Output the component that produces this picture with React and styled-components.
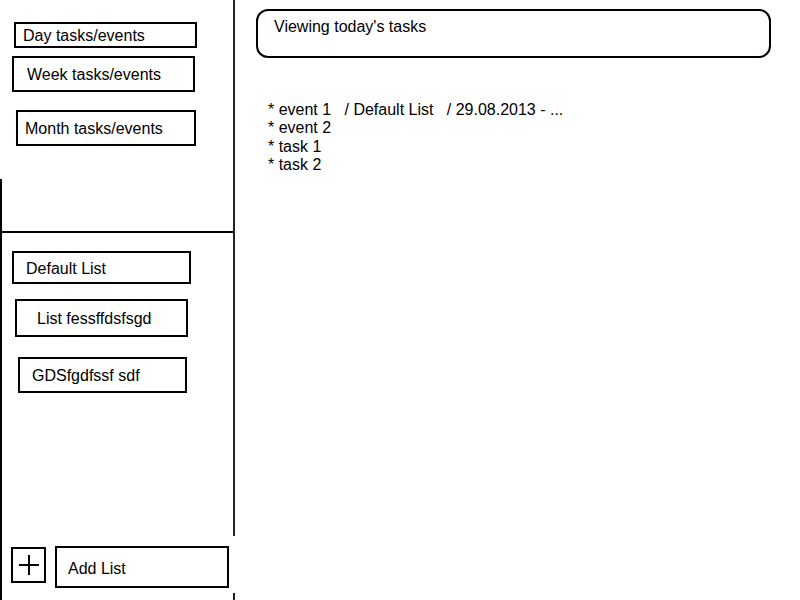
import React from "react";
import styled, { createGlobalStyle } from "styled-components";

const GlobalStyle = createGlobalStyle`
  html, body {
    margin: 0;
    padding: 0;
    background: #ffffff;
  }
  body {
    font-family: "Liberation Sans", Arial, sans-serif;
    font-size: 16px;
    color: #000;
  }
`;

const views = [
  { label: "Day tasks/events", top: 22, left: 14, width: 183, height: 26, pad: 7 },
  { label: "Week tasks/events", top: 8, left: 12, width: 183, height: 36, pad: 13 },
  { label: "Month tasks/events", top: 18, left: 16, width: 180, height: 36, pad: 7 },
];

const lists = [
  { label: "Default List", top: 18, left: 10, width: 179, height: 33, pad: 12 },
  { label: "List fessffdsfsgd", top: 15, left: 13, width: 173, height: 38, pad: 20 },
  { label: "GDSfgdfssf sdf", top: 20, left: 16, width: 169, height: 36, pad: 12 },
];

const items = [
  "* event 1   / Default List   / 29.08.2013 - ...",
  "* event 2",
  "* task 1",
  "* task 2",
];

function App() {
  return (
    <>
      <GlobalStyle />
      <Page>
        <Sidebar>
          <ViewsSection>
            {views.map((v) => (
              <NavBox
                key={v.label}
                $top={v.top}
                $left={v.left}
                $width={v.width}
                $height={v.height}
                $pad={v.pad}
              >
                {v.label}
              </NavBox>
            ))}
            <ViewsFiller />
          </ViewsSection>
          <ListsSection>
            {lists.map((l) => (
              <NavBox
                key={l.label}
                $top={l.top}
                $left={l.left}
                $width={l.width}
                $height={l.height}
                $pad={l.pad}
              >
                {l.label}
              </NavBox>
            ))}
          </ListsSection>
          <Footer>
            <PlusButton>
              <svg width="22" height="22" viewBox="0 0 22 22">
                <path d="M11 1 V21 M1 11 H21" stroke="#000" strokeWidth="2" />
              </svg>
            </PlusButton>
            <AddListBox>Add List</AddListBox>
          </Footer>
        </Sidebar>
        <Main>
          <Header>Viewing today's tasks</Header>
          <TaskList>
            {items.map((t) => (
              <TaskItem key={t}>{t}</TaskItem>
            ))}
          </TaskList>
        </Main>
      </Page>
    </>
  );
}

const Page = styled.div`
  display: flex;
  width: 800px;
  height: 600px;
  overflow: hidden;
`;

const Sidebar = styled.div`
  width: 235px;
  height: 600px;
  display: flex;
  flex-direction: column;
  flex-shrink: 0;
`;

const ViewsSection = styled.div`
  height: 233px;
  box-sizing: border-box;
  display: flex;
  flex-direction: column;
  border-right: 2px solid #222;
  border-bottom: 2px solid #000;
`;

const ViewsFiller = styled.div`
  margin-top: 33px;
  flex: 1;
  border-left: 2px solid #000;
`;

const NavBox = styled.div`
  box-sizing: border-box;
  margin-top: ${(p) => p.$top}px;
  margin-left: ${(p) => p.$left}px;
  width: ${(p) => p.$width}px;
  height: ${(p) => p.$height}px;
  padding-left: ${(p) => p.$pad}px;
  padding-top: 2px;
  border: 2px solid #000;
  display: flex;
  align-items: center;
  white-space: nowrap;
`;

const ListsSection = styled.div`
  flex: 1;
  display: flex;
  flex-direction: column;
  border-left: 2px solid #000;
  border-right: 2px solid #222;
`;

const Footer = styled.div`
  position: relative;
  height: 64px;
  box-sizing: border-box;
  padding: 10px 0 0 9px;
  display: flex;
  align-items: flex-start;
  gap: 9px;
  border-left: 2px solid #000;

  &::after {
    content: "";
    position: absolute;
    right: 0;
    bottom: 0;
    width: 2px;
    height: 7px;
    background: #222;
  }
`;

const PlusButton = styled.div`
  box-sizing: border-box;
  margin-top: 1px;
  width: 35px;
  height: 36px;
  border: 2px solid #000;
  display: flex;
  align-items: center;
  justify-content: center;
`;

const AddListBox = styled.div`
  box-sizing: border-box;
  width: 174px;
  height: 42px;
  padding: 4px 0 0 11px;
  border: 2px solid #000;
  display: flex;
  align-items: center;
`;

const Main = styled.div`
  flex: 1;
  display: flex;
  flex-direction: column;
  padding: 9px 0 0 21px;
`;

const Header = styled.div`
  box-sizing: border-box;
  width: 515px;
  height: 49px;
  padding: 7px 0 0 16px;
  border: 2px solid #000;
  border-radius: 12px;
  line-height: 18px;
`;

const TaskList = styled.div`
  margin-top: 43px;
  padding-left: 12px;
`;

const TaskItem = styled.div`
  line-height: 18.4px;
  white-space: pre;
`;

export default App;
